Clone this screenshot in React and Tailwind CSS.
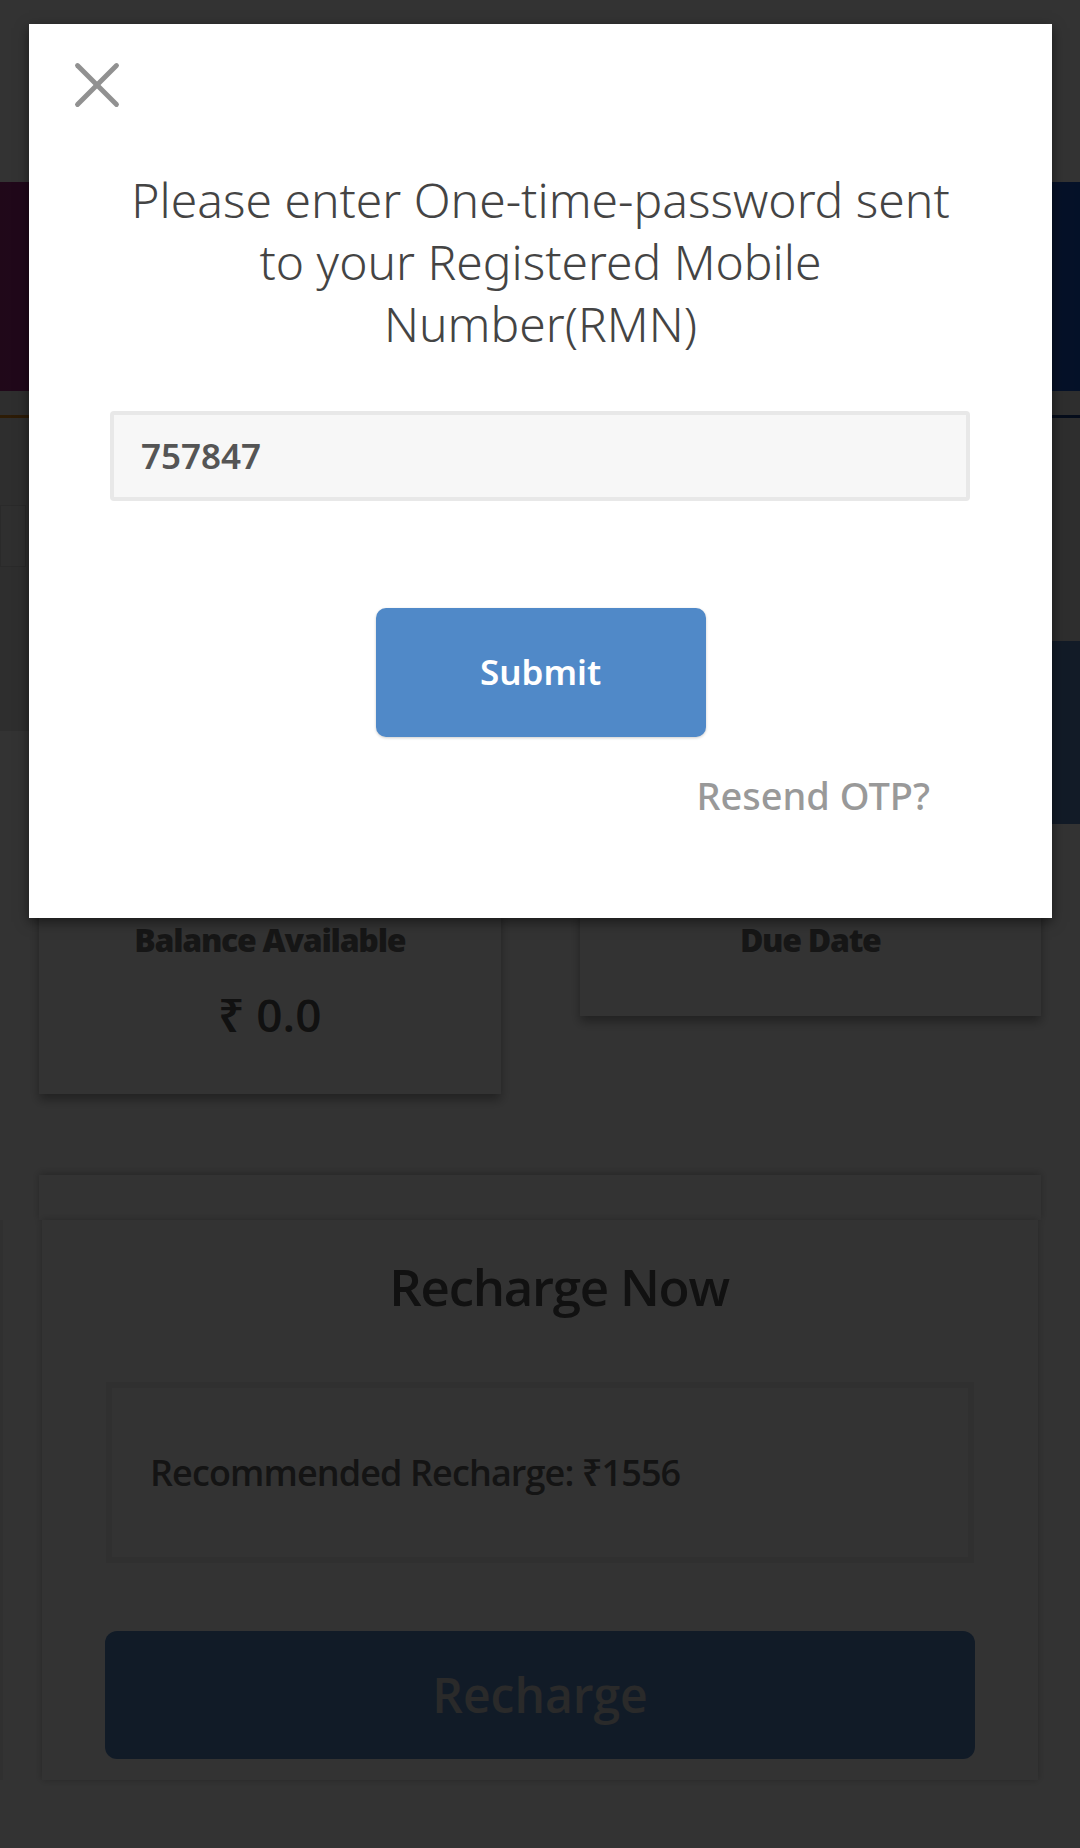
import { X } from 'lucide-react';

// Card shell shared by the balance / due date tiles
const InfoCard = ({ title, value, className = '' }) => (
  <div className={`bg-white shadow-[0_6px_10px_rgba(0,0,0,0.35)] flex flex-col items-center ${className}`}>
    <div className="mt-[52px] text-[32px] leading-[36px] font-extrabold tracking-[-0.04em] text-[#6f6f6f]">{title}</div>
    {value && <div className="mt-[30px] text-[46px] leading-[52px] font-semibold text-[#555]">{value}</div>}
  </div>
);

// Page that sits behind the OTP dialog
const AccountPage = () => (
  <div className="w-[1080px] h-[1848px] bg-white" style={{ fontFamily: '"Open Sans", "Noto Sans", sans-serif' }}>
    <div className="h-[182px] bg-white" />
    <div className="h-[209px] bg-gradient-to-r from-[#a0287f] to-[#1656c8]" />

    <div className="h-[340px] bg-[#e6e6e6]">
      <div className="h-[24px]" />
      <div className="h-[3px] bg-gradient-to-r from-[#e08a1a] to-[#1b3f86]" />
      <div className="mt-[87px] w-[26px] h-[62px] border border-[#cfcfcf] bg-[#ececec]" />
      <div className="flex justify-end mt-[74px]">
        <div className="w-[420px] h-[183px] bg-[#5a86c0]" />
      </div>
    </div>

    <div className="mt-[139px] px-[39px] grid grid-cols-2 gap-[79px] items-start">
      <InfoCard title="Balance Available" value="₹ 0.0" className="h-[224px]" />
      <InfoCard title="Due Date" className="h-[146px]" />
    </div>

    <div className="mt-[81px] mx-[39px] h-[45px] bg-white shadow-[0_-2px_8px_rgba(0,0,0,0.25)]" />
    <div className="relative">
      <div className="absolute left-0 top-0 w-[3px] h-[560px] bg-[#f0f0f0]" />
      <div className="mx-[42px] h-[560px] bg-white shadow-[0_0_8px_rgba(0,0,0,0.25)] flex flex-col">
        <div className="mt-[32px] pl-[38px] text-center text-[51px] leading-[68px] font-semibold tracking-tight text-[#555]">
          Recharge Now
        </div>
        <div className="mt-[62px] mx-[64px] h-[181px] border-[6px] border-[#efefef] flex items-center pl-[38px]">
          <span className="text-[36px] font-semibold tracking-tight text-[#666]">Recommended Recharge: ₹1556</span>
        </div>
        <button className="mt-[68px] mx-[63px] h-[128px] rounded-[12px] bg-[#5687c3] text-[48px] font-semibold text-[#cfcfcf]">
          Recharge
        </button>
      </div>
    </div>
  </div>
);

const OtpDialog = () => (
  <div
    className="absolute left-[29px] top-[24px] w-[1023px] h-[894px] bg-white shadow-[0_4px_12px_rgba(0,0,0,0.5)] flex flex-col"
    style={{ fontFamily: '"Noto Sans", "Open Sans", sans-serif' }}
  >
    <div className="mt-[40px] ml-[47px] w-[42px] h-[42px] flex items-center justify-center text-[#919191] blur-[0.6px]">
      <X size={78} strokeWidth={1.5} className="shrink-0" />
    </div>

    <div className="mt-[63px] text-center text-[48px] leading-[62px] font-light text-[#444]">
      Please enter One-time-password sent
      <br />
      to your Registered Mobile
      <br />
      Number(RMN)
    </div>

    <div className="mt-[56px] ml-[81px] mr-[82px] h-[90px] rounded-[4px] border-[4px] border-[#e8e8e8] bg-[#f7f7f7] flex items-center pl-[27px]">
      <span className="text-[35px] font-semibold text-[#555]">757847</span>
    </div>

    <button className="mt-[107px] self-center w-[330px] h-[129px] rounded-[10px] bg-[#5089c8] text-white text-[35px] font-semibold shadow-[0_1px_3px_rgba(0,0,0,0.2)]">
      Submit
    </button>

    <div className="mt-[34px] pr-[122px] text-right text-[38px] leading-[48px] font-medium text-[#999]">
      Resend OTP?
    </div>
  </div>
);

export default function App() {
  return (
    <div className="relative w-[1080px] h-[1848px] overflow-hidden">
      <AccountPage />
      <div className="absolute inset-0 bg-black/80" />
      <OtpDialog />
    </div>
  );
}
